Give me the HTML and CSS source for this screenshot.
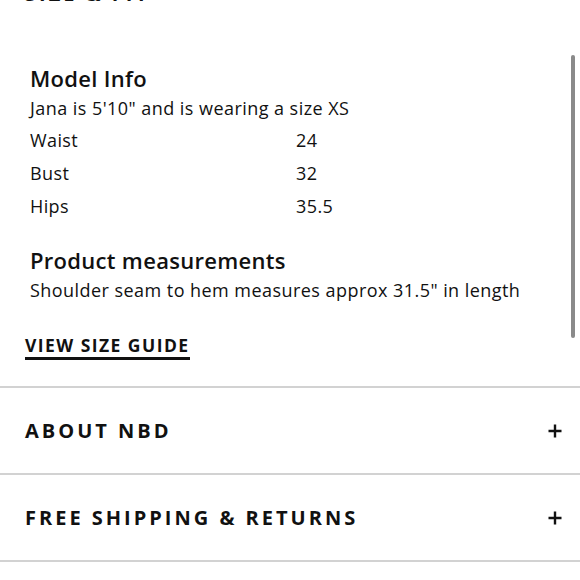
FILE: index.html
```html
<!DOCTYPE html>
<html>
<head>
<meta charset="utf-8">
<link rel="stylesheet" href="styles.css">
</head>
<body>
<div class="page">
  <section class="size-fit">
    <h2 class="acc-title top-title">SIZE &amp; FIT</h2>
    <div class="size-panel">
      <div class="size-body">
        <h3 class="sub">Model Info</h3>
        <p class="line">Jana is 5'10" and is wearing a size XS</p>
        <div class="measure">
          <span>Waist</span><span>24</span>
          <span>Bust</span><span>32</span>
          <span>Hips</span><span>35.5</span>
        </div>
        <h3 class="sub sub-gap">Product measurements</h3>
        <p class="line">Shoulder seam to hem measures approx 31.5" in length</p>
      </div>
      <div class="scroll-thumb"></div>
    </div>
    <a class="guide" href="#">VIEW SIZE GUIDE</a>
  </section>
  <div class="acc-row">
    <h2 class="acc-title">ABOUT NBD</h2>
    <svg class="plus" width="14" height="14" viewBox="0 0 14 14"><path d="M7 0.5V13.5M0.5 7H13.5" stroke="#111" stroke-width="2.4" fill="none"/></svg>
  </div>
  <div class="acc-row">
    <h2 class="acc-title">FREE SHIPPING &amp; RETURNS</h2>
    <svg class="plus" width="14" height="14" viewBox="0 0 14 14"><path d="M7 0.5V13.5M0.5 7H13.5" stroke="#111" stroke-width="2.4" fill="none"/></svg>
  </div>
  <div class="acc-end"></div>
</div>
</body>
</html>
```
FILE: styles.css
```css
* { box-sizing: border-box; }
html, body { margin: 0; padding: 0; background: #fff; }
body {
  font-family: "Open Sans", "Liberation Sans", sans-serif;
  color: #111;
  width: 580px;
  height: 580px;
  overflow: hidden;
}
.page { display: flex; flex-direction: column; }
.size-fit { display: flex; flex-direction: column; }
.acc-title {
  margin: 0;
  font-size: 20px;
  line-height: 24px;
  font-weight: 700;
  letter-spacing: 3px;
  color: #111;
}
.top-title { margin: -18px 0 0 25px; }
.size-panel { position: relative; margin-top: 57px; }
.size-body { padding-left: 30px; }
.sub {
  margin: 0;
  font-size: 22px;
  line-height: 30px;
  font-weight: 600;
  letter-spacing: 0.3px;
}
.sub-gap { margin-top: 22px; }
.line {
  margin: 0;
  font-size: 18px;
  line-height: 30px;
  font-weight: 400;
  letter-spacing: 0.45px;
}
.measure {
  display: grid;
  grid-template-columns: 266px auto;
  font-size: 18px;
  line-height: 33px;
  margin-top: 1px;
  letter-spacing: 0.4px;
}
.scroll-thumb {
  position: absolute;
  right: 5px;
  top: -8px;
  width: 4px;
  height: 283px;
  border-radius: 2px;
  background: #8a8a8a;
}
.guide {
  align-self: flex-start;
  margin: 30px 0 0 25px;
  font-size: 17.5px;
  line-height: 21px;
  font-weight: 700;
  letter-spacing: 1.45px;
  color: #111;
  text-decoration: none;
  border-bottom: 3px solid #111;
  padding-bottom: 1px;
}
.acc-row {
  display: flex;
  align-items: center;
  justify-content: space-between;
  height: 87px;
  border-top: 2px solid #d2d2d2;
  padding: 0 18px 0 25px;
}
.size-fit + .acc-row { margin-top: 26px; }
.acc-end { border-top: 2px solid #d2d2d2; }
.plus { display: block; }
```
